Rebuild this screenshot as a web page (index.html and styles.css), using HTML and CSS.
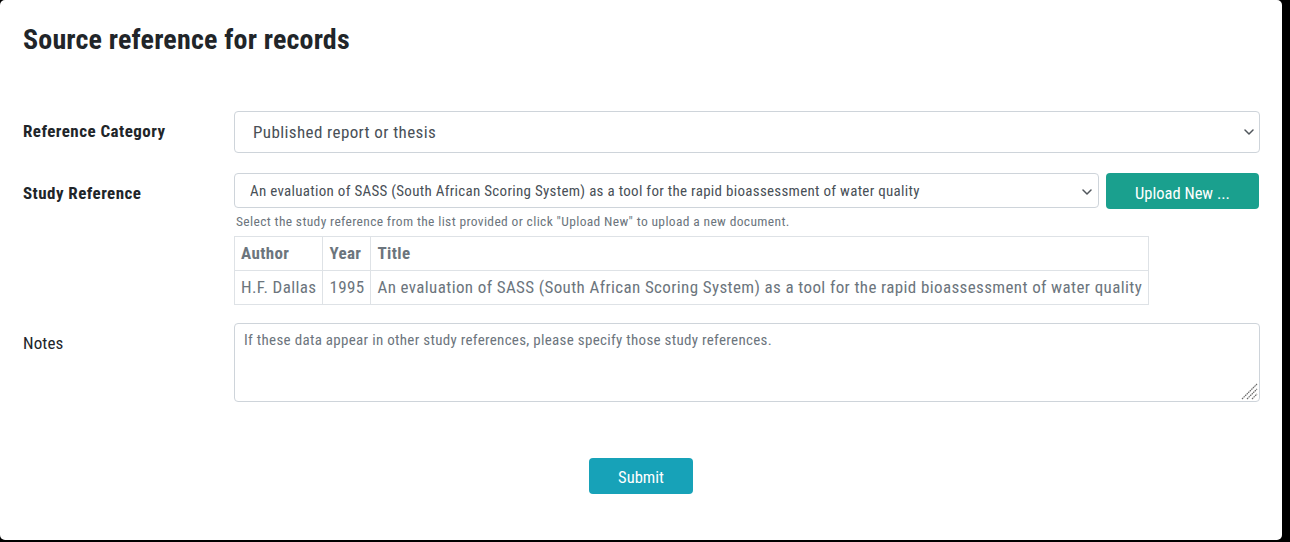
FILE: index.html
```html
<!DOCTYPE html>
<html lang="en">
<head>
<meta charset="utf-8">
<title>Source reference for records</title>
<link rel="stylesheet" href="styles.css">
</head>
<body>
<div class="card">
  <h2 class="title">Source reference for records</h2>
  <form class="form">
    <div class="row">
      <label class="label bold" for="cat">Reference Category</label>
      <div class="control">
        <div class="select-wrap">
          <select id="cat" class="select select-lg">
            <option>Published report or thesis</option>
          </select>
          <svg class="chevron" width="10" height="6" viewBox="0 0 10 6" aria-hidden="true"><path d="M1 1l4 4 4-4" fill="none" stroke="#50565c" stroke-width="1.5" stroke-linecap="round" stroke-linejoin="round"/></svg>
        </div>
      </div>
    </div>
    <div class="row">
      <label class="label bold" for="ref">Study Reference</label>
      <div class="control">
        <div class="ref-line">
          <div class="select-wrap">
            <select id="ref" class="select select-sm">
              <option>An evaluation of SASS (South African Scoring System) as a tool for the rapid bioassessment of water quality</option>
            </select>
            <svg class="chevron chevron-sm" width="10" height="6" viewBox="0 0 10 6" aria-hidden="true"><path d="M1 1l4 4 4-4" fill="none" stroke="#50565c" stroke-width="1.5" stroke-linecap="round" stroke-linejoin="round"/></svg>
          </div>
          <button type="button" class="btn btn-upload">Upload New ...</button>
        </div>
        <div class="help">Select the study reference from the list provided or click "Upload New" to upload a new document.</div>
        <table class="ref-table">
          <thead>
            <tr><th>Author</th><th>Year</th><th>Title</th></tr>
          </thead>
          <tbody>
            <tr><td>H.F. Dallas</td><td>1995</td><td>An evaluation of SASS (South African Scoring System) as a tool for the rapid bioassessment of water quality</td></tr>
          </tbody>
        </table>
      </div>
    </div>
    <div class="row row-notes">
      <label class="label" for="notes">Notes</label>
      <div class="control">
        <div class="notes-wrap">
          <textarea id="notes" class="notes" placeholder="If these data appear in other study references, please specify those study references."></textarea>
          <svg class="grip" width="18" height="18" viewBox="0 0 18 18" aria-hidden="true"><g stroke="#6b6b6b" stroke-width="1.2" stroke-dasharray="1.6 0.6"><path d="M2 17L17 2"/><path d="M7 17L17 7"/><path d="M12 17L17 12"/></g></svg>
        </div>
      </div>
    </div>
    <div class="actions">
      <button type="button" class="btn btn-submit">Submit</button>
    </div>
  </form>
</div>
</body>
</html>
```

FILE: styles.css
```css
html, body {
  margin: 0;
  padding: 0;
}
body {
  background: #000;
  font-family: Roboto, "Liberation Sans", sans-serif;
  font-stretch: 87.5%;
  color: #212529;
  font-size: 16px;
}
.card {
  width: 1282px;
  height: 540px;
  box-sizing: border-box;
  background: #fff;
  border-radius: 5px;
  padding: 23px 23px 0 23px;
}
.title {
  margin: 0 0 54px;
  font-size: 28px;
  line-height: 34px;
  font-weight: 700;
  letter-spacing: 0.18px;
  color: #212529;
}
.form {
  display: flex;
  flex-direction: column;
}
.row {
  display: grid;
  grid-template-columns: 211px 1fr;
  margin-bottom: 20px;
}
.row-notes {
  margin-top: -2px;
}
.label {
  padding-top: 8px;
  line-height: 24px;
  font-size: 17px;
  letter-spacing: 0.45px;
  color: #212529;
}
.label:not(.bold) {
  letter-spacing: 0.1px;
}
.bold {
  font-weight: 700;
}
.control {
  display: flex;
  flex-direction: column;
  align-items: flex-start;
}
.select-wrap {
  position: relative;
  display: flex;
}
.select {
  appearance: none;
  -webkit-appearance: none;
  font-family: inherit;
  font-stretch: inherit;
  color: #495057;
  background: #fff;
  border: 1px solid #ced4da;
  border-radius: 4px;
  box-sizing: border-box;
}
.chevron {
  position: absolute;
  right: 6px;
  top: 18px;
  pointer-events: none;
}
.chevron-sm {
  right: 7px;
  top: 16px;
}
.select-lg {
  width: 1026px;
  height: 42px;
  font-size: 17px;
  letter-spacing: 0.4px;
  padding: 0 24px 0 18px;
}
.ref-line {
  display: flex;
  gap: 7px;
  align-items: flex-start;
}
.select-sm {
  width: 865px;
  height: 35px;
  font-size: 15px;
  letter-spacing: 0.29px;
  padding: 0 24px 0 15px;
}
.btn {
  font-family: inherit;
  font-stretch: inherit;
  color: #fff;
  border: none;
  border-radius: 4px;
  font-size: 16.5px;
  cursor: pointer;
}
.btn-upload {
  width: 153px;
  height: 36px;
  background: #1aa08e;
  padding: 4px 0 0;
}
.help {
  margin-top: 3px;
  font-size: 13.5px;
  letter-spacing: 0.35px;
  line-height: 18px;
  color: #6c757d;
  padding-left: 2px;
}
.ref-table {
  margin-top: 6px;
  border-collapse: collapse;
  font-size: 17px;
  letter-spacing: 0.38px;
  color: #6c757d;
}
.ref-table th,
.ref-table td {
  border: 1px solid #dee2e6;
  padding: 4px 6px 5px;
  line-height: 24px;
  text-align: left;
  white-space: nowrap;
}
.ref-table th {
  font-weight: 700;
}
.notes-wrap {
  position: relative;
  display: flex;
}
.notes {
  width: 1026px;
  height: 79px;
  box-sizing: border-box;
  border: 1px solid #ced4da;
  border-radius: 4px;
  padding: 6px 9px;
  font-family: inherit;
  font-stretch: inherit;
  font-size: 15px;
  letter-spacing: 0.3px;
  line-height: 21px;
  color: #495057;
  resize: none;
}
.notes::placeholder {
  color: #6c757d;
}
.grip {
  position: absolute;
  right: 2px;
  bottom: 2px;
  pointer-events: none;
}
.actions {
  display: flex;
  justify-content: center;
  margin-top: 36px;
}
.btn-submit {
  width: 104px;
  height: 36px;
  background: #17a2b8;
  padding: 2px 0 0;
}
```
